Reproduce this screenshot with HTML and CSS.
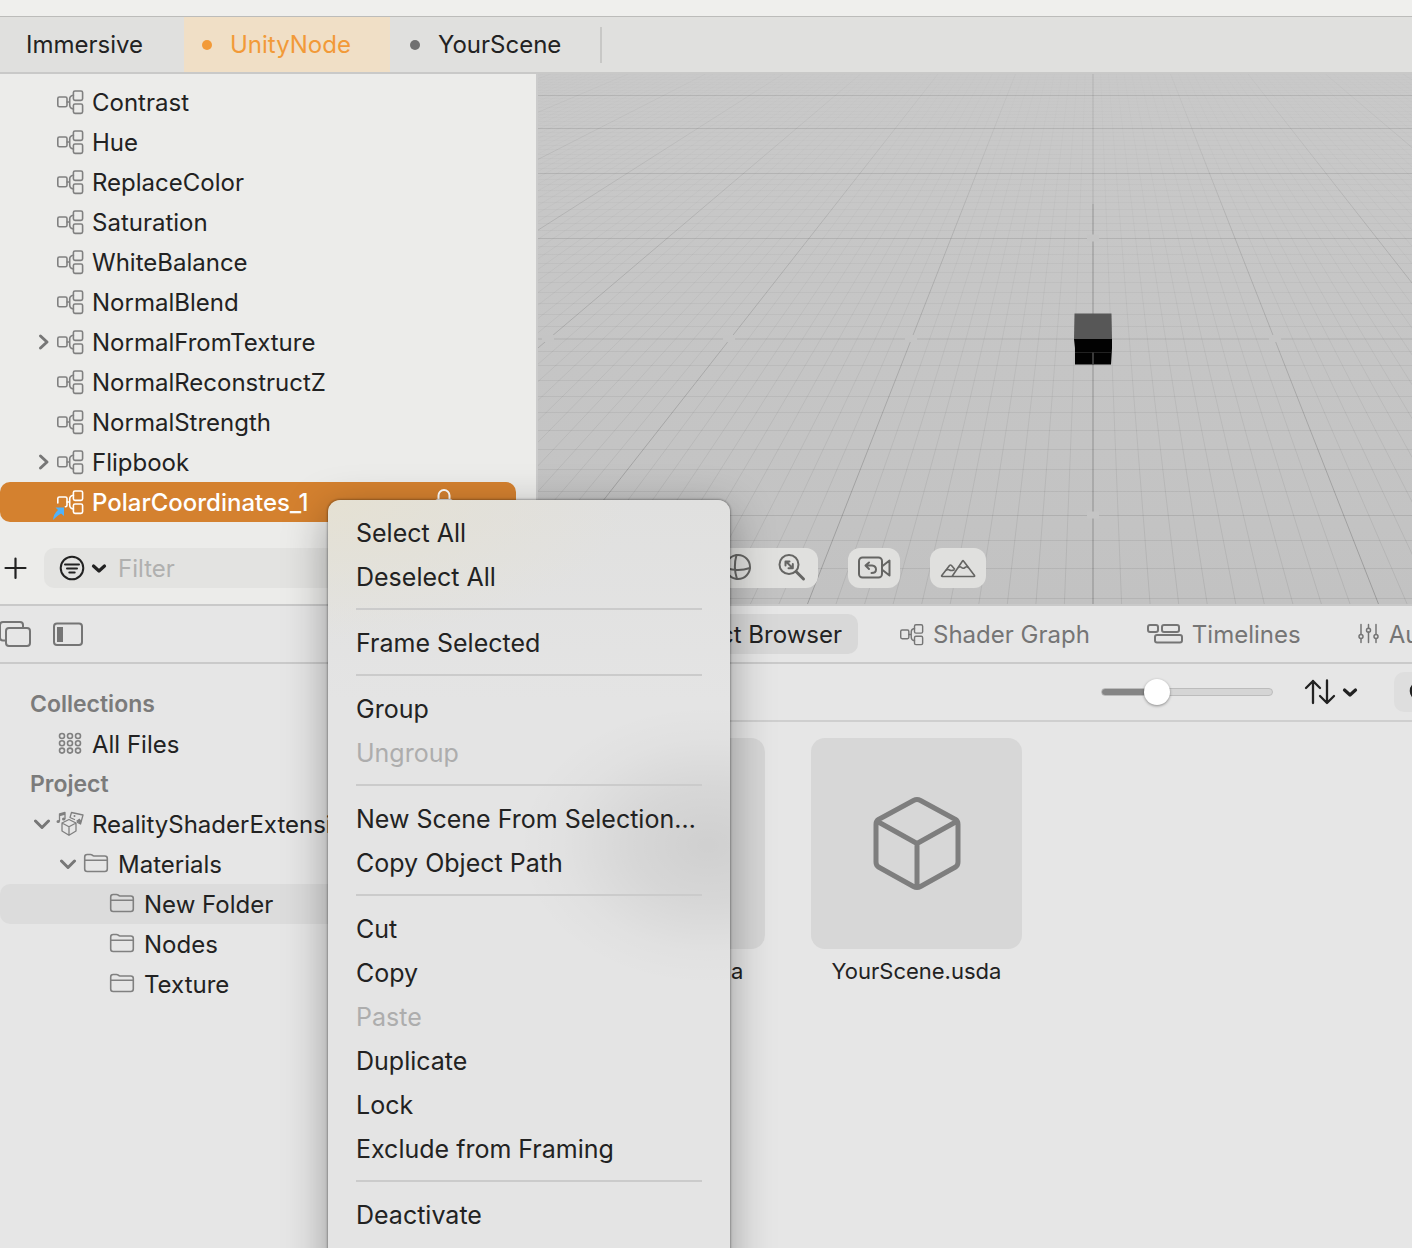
FILE: index.html
```html
<!DOCTYPE html>
<html lang="en">
<head>
<meta charset="utf-8">
<title>UnityNode</title>
<link rel="stylesheet" href="styles.css">
</head>
<body>
<svg class="defs" aria-hidden="true">
  <symbol id="node" viewBox="0 0 28 26">
    <rect x="1.8" y="8" width="9.2" height="9.8" rx="1.6"/><rect x="17.4" y="2" width="9.2" height="9.4" rx="1.6"/><rect x="17.4" y="15" width="9.2" height="9.4" rx="1.6"/>
    <path d="M11 13H13.7M17.4 6.3Q13.7 6.8 13.7 10v6Q13.7 19.4 17.4 20"/>
  </symbol>
  <symbol id="right" viewBox="0 0 18 18"><path d="M6.500 3l6.500 6L6.500 15"/></symbol>
  <symbol id="down" viewBox="0 0 18 18"><path d="M1.500 6L8 12.500L14.500 6"/></symbol>
  <symbol id="caret" viewBox="0 0 16 16"><path d="M2.500 6L8 11L13.500 6"/></symbol>
  <symbol id="folder" viewBox="0 0 28 22">
    <path d="M2.700 5Q2.700 2.500 5.200 2.500H8.500Q9.500 2.500 10.300 3.200T12 4H22.800Q25.300 4 25.300 6.500V17Q25.300 19.500 22.800 19.500H5.200Q2.700 19.500 2.700 17ZM2.700 8.200H25.300"/>
  </symbol>
</svg>

<div class="app">
  <div class="titlebar"></div>
  <nav class="tabs" aria-label="Open scenes">
    <button class="tab tab-first">Immersive</button>
    <button class="tab tab-active"><span class="dot"></span>UnityNode</button>
    <button class="tab"><span class="dot"></span>YourScene</button>
    <span class="tab-rule"></span>
  </nav>

  <div class="upper">
    <aside class="hierarchy">
      <ul class="tree">
        <li><button class="row"><i class="slot"></i><svg class="icon"><use href="#node"/></svg>Contrast</button></li>
        <li><button class="row"><i class="slot"></i><svg class="icon"><use href="#node"/></svg>Hue</button></li>
        <li><button class="row"><i class="slot"></i><svg class="icon"><use href="#node"/></svg>ReplaceColor</button></li>
        <li><button class="row"><i class="slot"></i><svg class="icon"><use href="#node"/></svg>Saturation</button></li>
        <li><button class="row"><i class="slot"></i><svg class="icon"><use href="#node"/></svg>WhiteBalance</button></li>
        <li><button class="row"><i class="slot"></i><svg class="icon"><use href="#node"/></svg>NormalBlend</button></li>
        <li><button class="row"><svg class="slot"><use href="#right"/></svg><svg class="icon"><use href="#node"/></svg>NormalFromTexture</button></li>
        <li><button class="row"><i class="slot"></i><svg class="icon"><use href="#node"/></svg>NormalReconstructZ</button></li>
        <li><button class="row"><i class="slot"></i><svg class="icon"><use href="#node"/></svg>NormalStrength</button></li>
        <li><button class="row"><svg class="slot"><use href="#right"/></svg><svg class="icon"><use href="#node"/></svg>Flipbook</button></li>
        <li><button class="row row-selected"><i class="slot"></i>
          <svg class="icon" viewBox="0 0 28 26">
            <path d="M1.800 14V9.600Q1.800 8 3.400 8H9.400Q11 8 11 9.600V16.200Q11 17.800 9.400 17.800"/><rect x="17.400" y="2" width="9.200" height="9.400" rx="1.600"/><rect x="17.400" y="15" width="9.200" height="9.400" rx="1.600"/>
            <path d="M11 13H13.700M17.400 6.300Q13.700 6.800 13.700 10v6Q13.700 19.400 17.400 20"/>
            <path class="ref-arrow" d="M-3 31Q-2.500 25 2 21L-.5 18.500H8V27L5 24.500Q.5 27-3 31Z"/>
          </svg>PolarCoordinates_1
          <svg class="lock" viewBox="0 0 20 28"><path d="M4.500 13V8.500a5.500 5.500 0 0 1 11 0V13"/><rect x="2" y="13" width="16" height="12" rx="2"/></svg>
        </button></li>
      </ul>
      <div class="filterbar">
        <button class="plain" aria-label="Add"><svg class="add" viewBox="0 0 24 24"><path d="M11.500 2.500V22M1.500 12H21.500"/></svg></button>
        <label class="filter">
          <svg class="filter-icon" viewBox="0 0 26 26"><circle cx="13" cy="13" r="11.300"/><path d="M6 9.500H20M8 13.500H18M10.300 17.500H15.700"/></svg>
          <svg class="caret"><use href="#caret"/></svg>
          <input type="text" placeholder="Filter" aria-label="Filter">
        </label>
      </div>
    </aside>

    <main class="viewport">
      <svg class="scene" viewBox="0 0 874 530" preserveAspectRatio="xMidYMid slice" aria-hidden="true">
        <defs>
          <linearGradient id="fade-minor" gradientUnits="userSpaceOnUse" x1="0" y1="0" x2="0" y2="530">
            <stop offset="0" stop-opacity=".008"/><stop offset=".3" stop-opacity=".03"/><stop offset=".6" stop-opacity=".055"/><stop offset="1" stop-opacity=".075"/>
          </linearGradient>
          <linearGradient id="fade-major" gradientUnits="userSpaceOnUse" x1="0" y1="0" x2="0" y2="530">
            <stop offset="0" stop-opacity=".02"/><stop offset=".3" stop-opacity=".11"/><stop offset="1" stop-opacity=".2"/>
          </linearGradient>
        </defs>
        <path id="minor" class="minor"/><path id="major" class="major"/><path id="major-depth" class="major-depth"/>
        <path class="axis axis-far" d="M555 0V130"/><path class="axis" d="M555 130V530"/><path class="axis axis-x" d="M0 265H874"/>
        <path class="crossing" d="M549 441h12M549 164h12M4 264.500h12M185 264.500h12M367 264.500h12M731 264.500h12"/>
        <path class="cube-top" d="M536.500 239.500H573.500L574 265H536Z"/>
        <path class="cube-front" d="M536 265H574V274L573 290.500H537V274Z"/>
        <path class="cube-line" d="M537 278.500H573"/><path class="cube-line cube-edge" d="M555 278.500V290"/>
      </svg>
      <div class="tools">
        <div class="tool-group">
          <button class="plain" aria-label="Orbit"><svg class="tool" viewBox="0 0 36 32"><circle cx="18" cy="15" r="12"/><path d="M16.500 3Q13 15 17 27M6 16Q18 20 30 16"/></svg></button>
          <button class="plain" aria-label="Zoom"><svg class="tool" viewBox="0 0 36 32"><circle cx="16" cy="12.500" r="9.500"/><path class="heavy" d="M23 19.500L30.500 27"/><path d="M13.500 10L19 15.500M12.500 13.500V9.500H16.500M19.800 12V16.300H15.500"/></svg></button>
        </div>
        <button class="tool-button tool-video" aria-label="Camera"><svg class="tool" viewBox="0 0 36 32"><rect x="3" y="5.500" width="23" height="20" rx="3.500"/><path d="M26.500 14L33.500 8.500V23.500L26.500 18M13 10.500L9.500 13.500L13 17M10 13.500H16Q20 14 20 17.500T15.500 21"/></svg></button>
        <button class="tool-button tool-env" aria-label="Environment"><svg class="tool tool-thin" viewBox="0 0 36 32"><path d="M12 24.500L22.500 9Q23 8.300 23.500 9L34.500 23.500Q35 24.500 34 24.500H2.300Q1.200 24.500 1.800 23.500L9.500 13.500Q10.500 12.500 11.500 13.500L14.500 17"/><path d="M18.500 15.500Q20 14 21.500 15.500T25 15.500T28 15.500M6.500 18Q8 17 9.500 18T14 18"/></svg></button>
      </div>
    </main>
  </div>

  <div class="panelbar">
    <div class="panel-left">
      <button class="plain" aria-label="Windows"><svg class="panel-icon" viewBox="0 0 34 28"><path d="M5 20.500H3Q0 20.500 0 17.500V5Q0 2 3 2H20Q23 2 23 5V8"/><rect x="6" y="8" width="24" height="18" rx="3"/></svg></button>
      <button class="plain" aria-label="Sidebar"><svg class="panel-icon" viewBox="0 0 34 28"><rect x="3" y="3.500" width="28" height="21.500" rx="3"/><path class="solid" d="M6 7H12V22H6Z"/></svg></button>
    </div>
    <nav class="panels" aria-label="Panels">
      <button class="panel panel-active">Project Browser</button>
      <button class="panel"><svg class="panel-node"><use href="#node"/></svg>Shader Graph</button>
      <button class="panel"><svg class="panel-time" viewBox="0 0 36 22"><rect x="1" y="2" width="10" height="7" rx="2"/><rect x="15" y="2" width="17" height="7" rx="2"/><rect x="8" y="12" width="27" height="7.500" rx="2"/></svg>Timelines</button>
      <button class="panel"><svg class="panel-mix" viewBox="0 0 22 22"><path d="M3 1.500V11.500M3 15.500V19.500M10.500 1.500V5.500M10.500 9V19.500M18 1.500V11.500M18 15.500V19.500"/><circle cx="3" cy="13.500" r="2"/><circle cx="10.500" cy="7.300" r="2"/><circle cx="18" cy="13.500" r="2"/></svg>Audio Mixer</button>
    </nav>
  </div>

  <div class="lower">
    <aside class="project">
      <h2 class="heading">Collections</h2>
      <ul class="tree">
        <li><button class="row"><i class="slot"></i><svg class="icon" viewBox="0 0 28 26"><circle cx="6" cy="5" r="2.500"/><circle cx="14" cy="5" r="2.500"/><circle cx="22" cy="5" r="2.500"/><circle cx="6" cy="12.300" r="2.500"/><circle cx="14" cy="12.300" r="2.500"/><circle cx="22" cy="12.300" r="2.500"/><circle cx="6" cy="19.600" r="2.500"/><circle cx="14" cy="19.600" r="2.500"/><circle cx="22" cy="19.600" r="2.500"/></svg>All Files</button></li>
      </ul>
      <h2 class="heading">Project</h2>
      <ul class="tree">
        <li><button class="row"><svg class="slot"><use href="#down"/></svg><svg class="icon icon-fine" viewBox="0 0 28 26"><path d="M13 8.500L20 12V20L13 24.300L6 20V12ZM6 12L13 15.800L20 12M13 15.800V24.300M14 6.500L15.500 1.500L27 4L24.500 13L21.500 11.500M15 7L18.500 8.500M3.500 10V3L9 1.500V7.500M3.500 4.500L9 3"/><path class="solid" d="M20 10L23.500 7.500L25.500 10L24.500 13ZM17.500 5a1 1 0 1 0 2 0a1 1 0 1 0-2 0M.5 10.500a1.700 1.500 0 1 0 3.400 0a1.700 1.500 0 1 0-3.400 0M6 8a1.700 1.500 0 1 0 3.400 0a1.700 1.500 0 1 0-3.400 0"/></svg>RealityShaderExtension</button></li>
        <li><button class="row level-2"><svg class="slot"><use href="#down"/></svg><svg class="icon folder"><use href="#folder"/></svg>Materials</button></li>
        <li><button class="row level-3 row-current"><i class="slot"></i><svg class="icon folder"><use href="#folder"/></svg>New Folder</button></li>
        <li><button class="row level-3"><i class="slot"></i><svg class="icon folder"><use href="#folder"/></svg>Nodes</button></li>
        <li><button class="row level-3"><i class="slot"></i><svg class="icon folder"><use href="#folder"/></svg>Texture</button></li>
      </ul>
    </aside>
    <section class="browser" aria-label="Project browser">
      <div class="browserbar">
        <input class="size" type="range" min="0" max="100" value="29" aria-label="Thumbnail size">
        <button class="plain sort" aria-label="Sort"><svg class="sort-icon" viewBox="0 0 32 28"><path d="M9 25V3M2 10L9 3L16 10M23 2.500V25M16 18L23 25L30 18"/></svg><svg class="caret"><use href="#caret"/></svg></button>
        <label class="search"><svg class="search-icon" viewBox="0 0 24 24"><circle cx="10" cy="11" r="8"/><path d="M16 17L22 23"/></svg><input type="search" aria-label="Search"></label>
      </div>
      <div class="files">
        <figure class="file"><div class="thumb"><svg viewBox="0 0 92 96"><use href="#cube"/></svg></div><figcaption>UnityNode.usda</figcaption></figure>
        <figure class="file"><div class="thumb"><svg viewBox="0 0 92 96"><g id="cube"><path d="M42.500 4.500Q46 2.700 49.500 4.500L84.500 23.500Q87 25 87 28.500V66Q87 69.500 84.500 71L49.500 90.500Q46 92.500 42.500 90.500L7.500 71Q5 69.500 5 66V28.500Q5 25 7.500 23.500ZM6.500 25.500L46 47.500L85.500 25.500M46 47.500V90"/></g></svg></div><figcaption>YourScene.usda</figcaption></figure>
      </div>
    </section>
  </div>

  <ul class="menu" role="menu">
    <li><button>Select All</button></li>
    <li><button>Deselect All</button></li>
    <li class="rule" role="separator"></li>
    <li><button>Frame Selected</button></li>
    <li class="rule" role="separator"></li>
    <li><button>Group</button></li>
    <li><button disabled>Ungroup</button></li>
    <li class="rule" role="separator"></li>
    <li><button>New Scene From Selection…</button></li>
    <li><button>Copy Object Path</button></li>
    <li class="rule" role="separator"></li>
    <li><button>Cut</button></li>
    <li><button>Copy</button></li>
    <li><button disabled>Paste</button></li>
    <li><button>Duplicate</button></li>
    <li><button>Lock</button></li>
    <li><button>Exclude from Framing</button></li>
    <li class="rule" role="separator"></li>
    <li><button>Deactivate</button></li>
  </ul>
</div>
<script src="grid.js"></script>
</body>
</html>
```
FILE: grid.js
```js
// Draws the ground plane of the viewport in one-point perspective.
const vanish = { x: 555, y: -197.4 };
const width = 874, height = 530;
const depthScale = 1667.3, cameraDepth = 2.61, spread = 0.03925;
let minor = '', major = '', depth = '';

for (let i = -80; i <= 60; i++) {
  if (i === 0) continue;
  const top = vanish.x + i * spread * -vanish.y;
  const bottom = vanish.x + i * spread * (height - vanish.y);
  const line = `M${top.toFixed(1)} 0L${bottom.toFixed(1)} ${height}`;
  if (i % 10 === 0) depth += line; else minor += line;
}
for (let k = -4; k < 60; k++) {
  const y = vanish.y + depthScale / (cameraDepth + k / 10);
  if (y < 0 || y > height || k === 10) continue;
  const line = `M0 ${Math.floor(y) + 0.5}H${width}`;
  if (k % 10 === 0) major += line; else minor += line;
}
document.getElementById('minor').setAttribute('d', minor);
document.getElementById('major').setAttribute('d', major);
document.getElementById('major-depth').setAttribute('d', depth);
```
FILE: styles.css
```css
* { box-sizing: border-box; }
body {
  margin: 0;
  font-family: Inter, "Liberation Sans", sans-serif;
  font-size: 24px;
  line-height: 32px;
  color: #222;
  background: #e6e6e6;
}
button, input { font: inherit; color: inherit; }
button { border: 0; background: none; padding: 0; text-align: left; white-space: nowrap; }
ul { list-style: none; margin: 0; padding: 0; }
svg { flex: none; fill: none; stroke: currentColor; stroke-width: 2; stroke-linecap: round; stroke-linejoin: round; }
.solid { fill: currentColor; stroke: none; }
.defs { position: absolute; width: 0; height: 0; }
.plain { display: flex; align-items: center; }

.app { position: relative; display: flex; flex-direction: column; height: 100vh; overflow: hidden; }
.titlebar { height: 16px; background: #efefed; flex: none; }

.tabs { display: flex; align-items: center; height: 58px; flex: none; background: #e0e0de; border-top: 1px solid #bcbcba; border-bottom: 2px solid #c9c9c8; }
.tab { display: flex; align-items: center; gap: 18px; height: 55px; padding: 0 39px 0 20px; }
.tab-first { width: 184px; padding-left: 26px; }
.tab-active { width: 206px; padding: 0 0 0 18px; background: #f0dfc6; color: #f29a38; }
.dot { flex: none; width: 10px; height: 10px; border-radius: 50%; background: #707070; }
.tab-active .dot { background: #f29a38; }
.tab-rule { width: 2px; height: 36px; background: #c8c8c6; }

.upper { display: grid; grid-template-columns: 536px 1fr; height: 532px; flex: none; border-bottom: 2px solid #c9c9c9; }
.hierarchy { display: flex; flex-direction: column; justify-content: space-between; padding: 8px 20px 16px 0; background: #ececea; }
.row { display: flex; align-items: center; width: 100%; height: 40px; padding: 2px 0 0 34px; border-radius: 10px; }
.slot { width: 18px; height: 18px; margin: 0 4px 2px 0; flex: none; color: #777; stroke-width: 3; }
.icon { width: 28px; height: 26px; margin: 0 8px 2px 0; overflow: visible; color: #808080; stroke-width: 1.6; }
.icon-fine { stroke-width: 1.3; }
.folder { height: 22px; margin-bottom: 4px; }
.level-2 { padding-left: 60px; }
.level-3 { padding-left: 86px; }
.row-selected { background: #d4812f; color: #fff; font-weight: 500; }
.row-selected .icon { color: #fff; }
.ref-arrow { fill: #4fb2fa; stroke: none; }
.lock { width: 20px; height: 28px; margin: 0 62px 4px auto; }
.row-current { background: #dcdcdc; }
.filterbar { display: flex; align-items: center; gap: 16px; padding-left: 4px; }
.add { width: 24px; height: 24px; stroke-width: 2.2; }
.filter { display: flex; align-items: center; flex: 1; height: 40px; padding-left: 15px; border-radius: 10px; background: #e3e3e1; }
.filter-icon { width: 26px; height: 26px; }
.caret { width: 16px; height: 16px; margin-left: 6px; stroke-width: 3.2; }
.filter input, .search input { min-width: 0; flex: 1; border: 0; outline: 0; padding: 0; background: none; }
.filter input { margin-left: 11px; padding-top: 2px; }
.filter input::placeholder { color: #b0b0af; opacity: 1; }

.viewport { position: relative; display: flex; align-items: flex-end; padding: 0 0 16px 80px; border-left: 2px solid #cbcbcb; background: linear-gradient(#c9c9c9, #c6c6c6 40%, #c2c2c2); }
.scene { position: absolute; inset: 0; width: 100%; height: 100%; stroke-linecap: butt; }
.minor { stroke: url(#fade-minor); stroke-width: 1; }
.major { stroke: rgba(0, 0, 0, .1); stroke-width: 1; }
.major-depth { stroke: url(#fade-major); stroke-width: 1; }
.axis { stroke: rgba(0, 0, 0, .13); stroke-width: 2; }
.axis-far, .axis-x { stroke: rgba(0, 0, 0, .05); }
.crossing { stroke: #c5c5c5; stroke-width: 7; }
.cube-top { fill: #575757; stroke: none; }
.cube-front { fill: #020202; stroke: none; }
.cube-line { stroke: #222; stroke-width: 1; }
.cube-edge { stroke: #3a3a3a; stroke-width: 2; }
.tools { position: relative; display: flex; gap: 30px; }
.tool-group, .tool-button { display: flex; align-items: center; justify-content: center; height: 40px; border-radius: 12px; background: #e0e0de; color: #656563; }
.tool-group { width: 200px; gap: 17px; justify-content: flex-end; padding-right: 9px; }
.tool-video { width: 52px; }
.tool-env { width: 56px; }
.tool { width: 36px; height: 32px; }
.tool .heavy { stroke-width: 3; }
.tool-thin { stroke-width: 1.6; }

.panelbar { display: flex; align-items: center; height: 58px; flex: none; overflow: hidden; border-bottom: 2px solid #cacaca; background: #e6e6e6; color: #757575; }
.panel-left { display: flex; gap: 17px; width: 608px; flex: none; }
.panel-icon { width: 34px; height: 28px; overflow: visible; }
.panels { display: flex; gap: 25px; }
.panel { display: flex; align-items: center; gap: 9px; height: 40px; padding: 2px 16px 0; border-radius: 10px; flex: none; }
.panel svg { margin-bottom: 2px; }
.panel-active { width: 250px; justify-content: flex-end; background: #d8d8d8; color: #222; }
.panel-node { width: 25px; height: 23px; stroke-width: 1.6; }
.panel-time { width: 36px; height: 22px; }
.panel-mix { width: 22px; height: 22px; stroke-width: 1.5; }

.lower { display: grid; grid-template-columns: 536px 1fr; flex: 1; min-height: 0; }
.project { padding: 20px 20px 0 0; overflow: hidden; }
.heading { margin: 0; padding-left: 30px; font-size: 23px; line-height: 40px; font-weight: 600; color: #7b7b7b; }
.browser { min-width: 0; }
.browserbar { display: flex; align-items: center; justify-content: flex-end; height: 58px; overflow: hidden; border-bottom: 2px solid #cfcfcf; }
.size { appearance: none; width: 172px; height: 26px; margin: 0 31px 0 0; background: none; }
.size::-webkit-slider-runnable-track { height: 8px; border-radius: 4px; border: 1px solid #bcbcbc; background: linear-gradient(90deg, #858585 32%, #d5d5d5 32%); }
.size::-webkit-slider-thumb { appearance: none; width: 26px; height: 26px; margin-top: -10px; border-radius: 50%; background: #fff; box-shadow: 0 1px 3px rgba(0, 0, 0, .4); }
.sort { margin-right: 36px; }
.sort-icon { width: 32px; height: 28px; stroke-width: 2.3; }
.search { display: flex; align-items: center; width: 240px; height: 40px; flex: none; margin-right: -222px; padding-left: 15px; border-radius: 10px; background: #dedede; }
.search-icon { width: 24px; height: 24px; stroke-width: 2.6; }
.files { display: flex; gap: 46px; padding: 16px 18px; }
.file { width: 211px; margin: 0; text-align: center; }
.thumb { display: flex; align-items: center; justify-content: center; height: 211px; border-radius: 14px; background: #d7d7d7; color: #7e7e7e; }
.thumb svg { width: 92px; height: 96px; stroke-width: 5; }
figcaption { margin-top: 6px; font-size: 22px; }

.menu {
  position: absolute; top: 500px; left: 328px; bottom: -40px; width: 402px; padding: 10px 28px;
  border-radius: 12px;
  background:
    radial-gradient(ellipse 190px 140px at 380px 345px, rgba(0, 0, 0, .09), rgba(0, 0, 0, .06) 40%, rgba(0, 0, 0, .015) 75%, transparent),
    radial-gradient(ellipse 300px 140px at 0 0, #e5e1d3, rgba(229, 225, 211, 0)),
    linear-gradient(#e0e0df, #e4e4e4 200px);
  box-shadow: 0 0 2px 1px rgba(0, 0, 0, .28), 0 12px 44px rgba(0, 0, 0, .34);
  font-size: 25px;
}
.menu button { display: block; width: 100%; padding-top: 2px; line-height: 42px; }
.menu button:disabled { color: #adadad; }
.rule { height: 22px; border: solid transparent; border-width: 10px 0; background: #cbcbcb; background-clip: padding-box; }
```
